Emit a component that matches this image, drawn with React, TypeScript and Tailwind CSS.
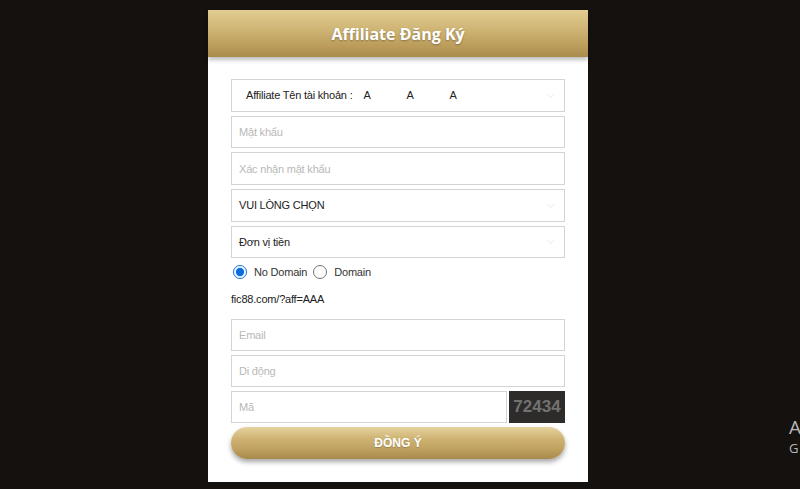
import { ChevronDown } from 'lucide-react'

function Field({ placeholder, h = 'h-[32px]' }: { placeholder: string; h?: string }) {
  return (
    <input
      placeholder={placeholder}
      className={`${h} w-full border border-[#d4d4d4] px-[7px] text-[11px] text-[#333] outline-none placeholder:text-[#b8b8b8]`}
    />
  )
}

function SelectBox({ children, h = 'h-[33px]' }: { children: React.ReactNode; h?: string }) {
  return (
    <div className={`flex ${h} w-full items-center justify-between border border-[#d4d4d4] px-[7px] text-[11px] text-[#222]`}>
      {children}
      <ChevronDown className="h-[12px] w-[12px] text-[#d8d8d8]" strokeWidth={1.2} />
    </div>
  )
}

export default function App() {
  return (
    <div className="relative flex min-h-[489px] overflow-hidden bg-[#14110f] font-['Liberation_Sans',Arial,sans-serif] tracking-[-0.2px]">
      <div className="mt-[10px] ml-[208px] flex h-[472px] w-[380px] flex-col bg-white">
        <div className="flex h-[47px] items-center justify-center bg-[linear-gradient(to_bottom,#e3cd92_0%,#cdb272_45%,#b99a58_80%,#a98b4c_100%)] shadow-[0_3px_4px_rgba(0,0,0,0.25)]">
          <h1 className="font-['Open_Sans',sans-serif] text-[16px] font-bold tracking-normal text-white [text-shadow:0_1px_2px_rgba(0,0,0,0.3)]">
            Affiliate Đăng Ký
          </h1>
        </div>

        <div className="flex flex-col px-[23px] pt-[22px]">
          <SelectBox>
            <span className="flex items-center pl-[7px]">
              <span>Affiliate Tên tài khoản :</span>
              <span className="ml-[11px] w-[43px]">A</span>
              <span className="w-[43px]">A</span>
              <span>A</span>
            </span>
          </SelectBox>
          <div className="mt-[4px]">
            <Field placeholder="Mật khẩu" />
          </div>
          <div className="mt-[4px]">
            <Field placeholder="Xác nhận mật khẩu" h="h-[33px]" />
          </div>
          <div className="mt-[4px]">
            <SelectBox>
              <span>VUI LÒNG CHỌN</span>
            </SelectBox>
          </div>
          <div className="mt-[4px]">
            <SelectBox h="h-[32px]">
              <span>Đơn vị tiền</span>
            </SelectBox>
          </div>

          <div className="mt-[6px] ml-[2px] flex items-center gap-[4px] text-[11px] text-[#333]">
            <input type="radio" name="domain" defaultChecked className="m-0 h-[14px] w-[14px] accent-[#0b6ee0]" />
            <span className="mr-[2px] ml-[3px]">No Domain</span>
            <input type="radio" name="domain" className="m-0 h-[14px] w-[14px]" />
            <span className="ml-[3px]">Domain</span>
          </div>
          <div className="mt-[11px] text-[11px] leading-[14px] text-[#222]">fic88.com/?aff=AAA</div>

          <div className="mt-[13px] flex flex-col gap-[4px]">
            <Field placeholder="Email" />
            <Field placeholder="Di động" />
            <div className="flex">
              <input
                placeholder="Mã"
                className="h-[32px] flex-1 border border-[#d4d4d4] px-[7px] text-[11px] outline-none placeholder:text-[#b8b8b8]"
              />
              <div className="ml-[2px] flex h-[32px] w-[56px] items-center justify-center bg-[#2d2c2a] text-[17px] font-bold tracking-normal text-[#727272]">
                72434
              </div>
            </div>
          </div>

          <button className="mt-[4px] h-[32px] w-full rounded-full bg-[linear-gradient(to_bottom,#e6d3a0_0%,#cfb474_35%,#bfa060_70%,#a88a4c_100%)] text-[12px] font-bold tracking-normal text-white shadow-[0_3px_5px_rgba(0,0,0,0.35)] [text-shadow:0_1px_1px_rgba(0,0,0,0.2)]">
            ĐỒNG Ý
          </button>
        </div>
      </div>

      <div className="absolute top-[418px] left-[789px] flex flex-col font-['Open_Sans',sans-serif] leading-none text-[#b8b8b8]">
        <span className="text-[19px]">A</span>
        <span className="mt-[5px] text-[13px]">G</span>
      </div>
    </div>
  )
}
